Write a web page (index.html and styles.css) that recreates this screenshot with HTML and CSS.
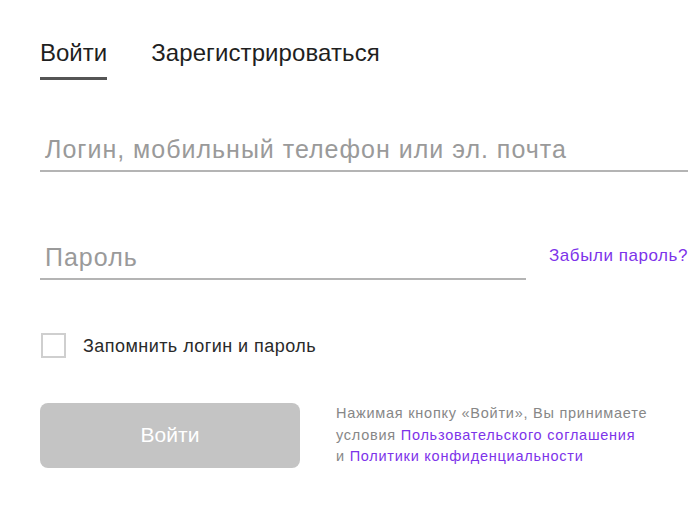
FILE: index.html
```html
<!DOCTYPE html>
<html lang="ru">
<head>
<meta charset="utf-8">
<title>Вход</title>
<link rel="stylesheet" href="styles.css">
</head>
<body>
<div class="page">
  <nav class="tabs">
    <div class="tab active">Войти</div>
    <div class="tab">Зарегистрироваться</div>
  </nav>
  <div class="field login">Логин, мобильный телефон или эл. почта</div>
  <div class="pass-row">
    <div class="field password">Пароль</div>
    <a class="forgot">Забыли пароль?</a>
  </div>
  <label class="remember">
    <span class="checkbox"></span>
    <span class="remember-text">Запомнить логин и пароль</span>
  </label>
  <div class="submit-row">
    <button class="submit">Войти</button>
    <p class="terms">Нажимая кнопку «Войти», Вы принимаете<br>условия <a class="link">Пользовательского соглашения</a><br>и <a class="link">Политики конфиденциальности</a></p>
  </div>
</div>
</body>
</html>
```

FILE: styles.css
```css
html, body {
  margin: 0;
  background: #ffffff;
}
body {
  font-family: "Liberation Sans", Arial, sans-serif;
  color: #222;
}
.page {
  padding: 39px 12px 0 40px;
}
.tabs {
  display: flex;
  gap: 44px;
  align-items: flex-start;
}
.tab {
  font-size: 24px;
  line-height: 28px;
  color: #1f1f1f;
  padding-bottom: 10px;
  letter-spacing: 0.1px;
}
.tab.active {
  letter-spacing: 0;
  border-bottom: 3px solid #555;
}
.field {
  font-size: 25px;
  line-height: 30px;
  color: #9a9a9a;
  padding: 0 0 6px 5px;
  border-bottom: 2px solid #b4b4b4;
  letter-spacing: 1px;
}
.login {
  margin-top: 54px;
}
.pass-row {
  margin-top: 70px;
  display: flex;
  justify-content: space-between;
  align-items: flex-start;
}
.password {
  width: 481px;
}
.forgot {
  font-size: 17px;
  line-height: 20px;
  padding-top: 4px;
  letter-spacing: 0.55px;
  color: #7d33ea;
  cursor: pointer;
}
.remember {
  margin-top: 53px;
  display: flex;
  align-items: center;
  gap: 17px;
}
.checkbox {
  width: 21px;
  height: 21px;
  border: 2px solid #cfcfcf;
  margin-left: 1px;
}
.remember-text {
  font-size: 18px;
  line-height: 22px;
  letter-spacing: 0.45px;
  color: #2a2a2a;
}
.submit-row {
  margin-top: 45px;
  display: flex;
  align-items: flex-start;
  gap: 36px;
}
.submit {
  width: 260px;
  height: 65px;
  border: none;
  border-radius: 8px;
  background: #c4c4c4;
  color: #ffffff;
  font-family: "Liberation Sans", Arial, sans-serif;
  font-size: 21px;
  padding: 0 0 2px;
}
.terms {
  margin: 0;
  font-size: 14.5px;
  line-height: 21.5px;
  letter-spacing: 0.75px;
  color: #878787;
  white-space: nowrap;
}
.link {
  color: #7d33ea;
  cursor: pointer;
}
```
